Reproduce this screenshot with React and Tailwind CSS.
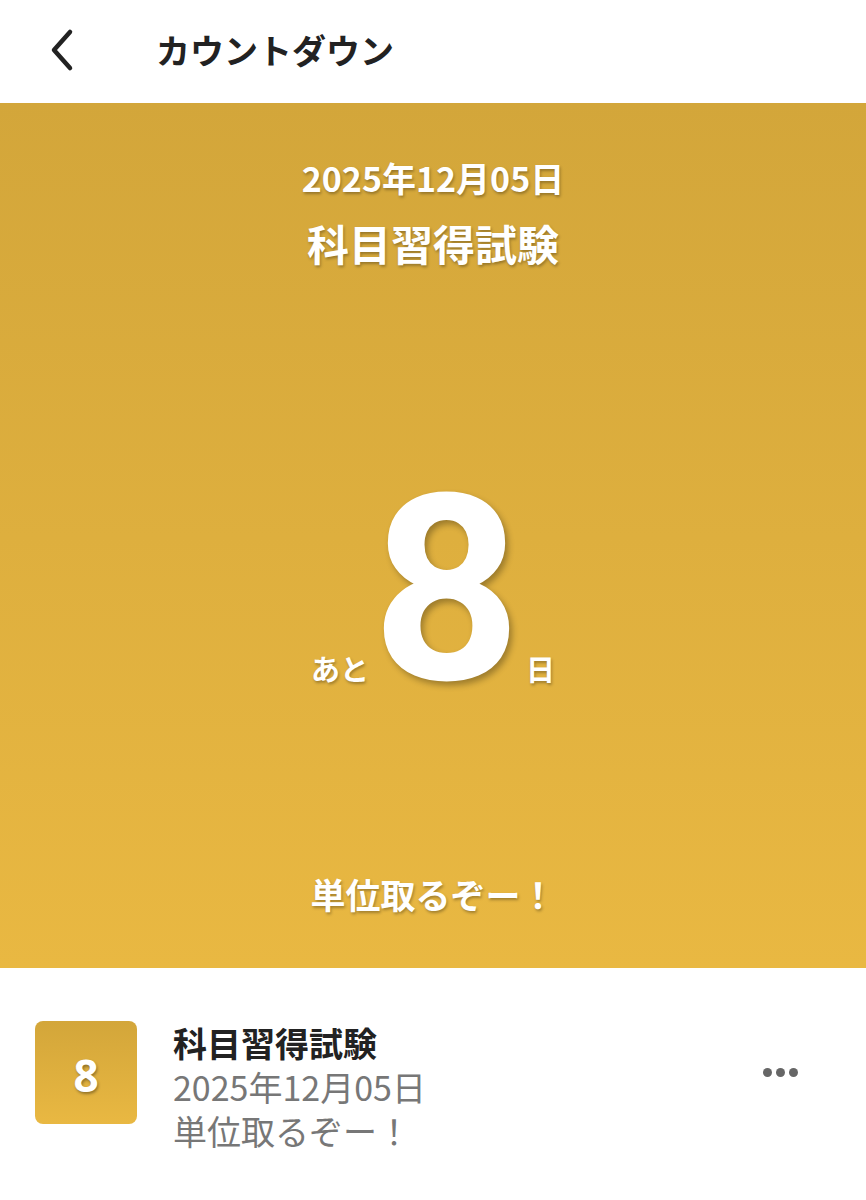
import React from "react";

export default function App() {
  const jp = { fontFamily: '"Noto Sans CJK JP", "Noto Sans", sans-serif' };
  const shadow = "[text-shadow:1px_2px_3px_rgba(0,0,0,0.3)]";
  return (
    <div className="w-[866px] h-[1200px] bg-white overflow-hidden" style={jp}>
      <div className="h-[103px] flex items-center">
        <svg width="40" height="48" viewBox="0 0 40 48" className="ml-[42px] -mt-[4px]">
          <path d="M28 6 L12 24 L28 42" fill="none" stroke="#222" strokeWidth="4.5" strokeLinecap="round" strokeLinejoin="round" />
        </svg>
        <div className="ml-[74px] -mt-[4px] text-[34px] font-bold text-[#222] leading-none">カウントダウン</div>
      </div>
      <div className="h-[865px] bg-gradient-to-b from-[#d3a63a] to-[#e9b842] flex flex-col items-center text-white">
        <div className={`mt-[55px] text-[34px] font-bold leading-[40px] ${shadow}`}>2025年12月05日</div>
        <div className={`mt-[20px] text-[42px] font-bold leading-[50px] ${shadow}`}>科目習得試験</div>
        <div className="mt-[212px] flex items-end">
          <span className={`text-[29px] font-bold leading-none mb-[17px] mr-[3px] ${shadow}`}>あと</span>
          <span
            className="text-[260px] font-bold leading-[220px] [text-shadow:3px_4px_6px_rgba(0,0,0,0.3)]"
            style={{ fontFamily: 'Roboto, "Liberation Sans", sans-serif' }}
          >
            8
          </span>
          <span className={`text-[29px] font-bold leading-none mb-[17px] ml-[5px] ${shadow}`}>日</span>
        </div>
        <div className={`mt-[172px] text-[35px] font-bold leading-[44px] ${shadow}`}>単位取るぞー！</div>
      </div>
      <div className="flex items-start pt-[53px]">
        <div className="ml-[35px] w-[102px] h-[103px] rounded-[8px] bg-gradient-to-b from-[#d3a63a] to-[#e9b842] flex items-center justify-center">
          <span
            className="text-white text-[44px] font-bold leading-none mt-[4px] [text-shadow:1px_2px_3px_rgba(0,0,0,0.35)]"
            style={{ fontFamily: '"Open Sans", sans-serif' }}
          >
            8
          </span>
        </div>
        <div className="ml-[36px] flex flex-col">
          <div className="text-[34px] font-bold text-[#222] leading-[44px]">科目習得試験</div>
          <div className="text-[34px] text-[#777] leading-[44px]">2025年12月05日</div>
          <div className="text-[34px] text-[#777] leading-[44px]">単位取るぞー！</div>
        </div>
        <div className="ml-auto mr-[68px] mt-[47px] flex gap-[4px]">
          <span className="w-[9px] h-[9px] rounded-full bg-[#666]" />
          <span className="w-[9px] h-[9px] rounded-full bg-[#666]" />
          <span className="w-[9px] h-[9px] rounded-full bg-[#666]" />
        </div>
      </div>
    </div>
  );
}
